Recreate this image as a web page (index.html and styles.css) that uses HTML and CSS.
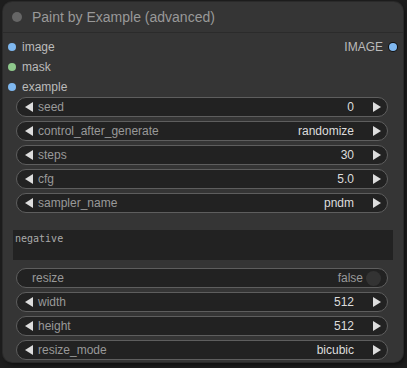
FILE: index.html
```html
<!DOCTYPE html>
<html>
<head>
<meta charset="utf-8">
<link rel="stylesheet" href="styles.css">
</head>
<body>
<div class="node">
  <div class="title">
    <span class="title-dot"></span>
    <span class="title-text">Paint by Example (advanced)</span>
  </div>
  <div class="slots">
    <div class="slot-row">
      <div class="slot-in"><span class="dot blue"></span><span>image</span></div>
      <div class="slot-out"><span>IMAGE</span><span class="dot blue ring"></span></div>
    </div>
    <div class="slot-row">
      <div class="slot-in"><span class="dot green"></span><span>mask</span></div>
    </div>
    <div class="slot-row">
      <div class="slot-in"><span class="dot blue"></span><span>example</span></div>
    </div>
  </div>
  <div class="widgets">
    <div class="widget"><span class="arrow-l"></span><span class="label">seed</span><span class="value">0</span><span class="arrow-r"></span></div>
    <div class="widget"><span class="arrow-l"></span><span class="label">control_after_generate</span><span class="value">randomize</span><span class="arrow-r"></span></div>
    <div class="widget"><span class="arrow-l"></span><span class="label">steps</span><span class="value">30</span><span class="arrow-r"></span></div>
    <div class="widget"><span class="arrow-l"></span><span class="label">cfg</span><span class="value">5.0</span><span class="arrow-r"></span></div>
    <div class="widget"><span class="arrow-l"></span><span class="label">sampler_name</span><span class="value">pndm</span><span class="arrow-r"></span></div>
  </div>
  <div class="textarea">negative</div>
  <div class="widgets">
    <div class="widget toggle"><span class="label">resize</span><span class="value muted">false</span><span class="knob"></span></div>
    <div class="widget"><span class="arrow-l"></span><span class="label">width</span><span class="value">512</span><span class="arrow-r"></span></div>
    <div class="widget"><span class="arrow-l"></span><span class="label">height</span><span class="value">512</span><span class="arrow-r"></span></div>
    <div class="widget"><span class="arrow-l"></span><span class="label">resize_mode</span><span class="value">bicubic</span><span class="arrow-r"></span></div>
  </div>
</div>
</body>
</html>
```

FILE: styles.css
```css
html, body {
  margin: 0;
  padding: 0;
  background: #1d1d1d;
  width: 407px;
  height: 368px;
  overflow: hidden;
  font-family: "Liberation Sans", Arial, sans-serif;
}
.node {
  margin: 2px 0 0 3px;
  width: 400px;
  height: 360px;
  box-sizing: border-box;
  background: #353535;
  border-radius: 9px;
  box-shadow: 0 0 0 1px #2a2a2a, 2px 3px 4px rgba(0,0,0,0.5);
  display: flex;
  flex-direction: column;
}
.title {
  height: 30px;
  border-bottom: 1px solid #2b2b2b;
  display: flex;
  align-items: center;
  padding-left: 9px;
  gap: 10px;
}
.title-dot {
  width: 10px;
  height: 10px;
  border-radius: 50%;
  background: #666;
}
.title-text {
  color: #999;
  font-size: 14px;
}
.slots {
  padding-top: 4px;
  display: flex;
  flex-direction: column;
}
.slot-row {
  height: 20px;
  display: flex;
  align-items: center;
  justify-content: space-between;
  padding: 0 6px 0 5px;
  font-size: 12px;
  color: #bbb;
}
.slot-in, .slot-out {
  display: flex;
  align-items: center;
  gap: 6px;
}
.dot {
  width: 8px;
  height: 8px;
  border-radius: 50%;
}
.blue { background: #7fb8f0; }
.green { background: #8fc98c; }
.ring {
  width: 8px;
  height: 8px;
  box-shadow: 0 0 0 1px #111;
}
.widgets {
  display: flex;
  flex-direction: column;
  gap: 4px;
  margin: 0 15px 0 13px;
}
.widget {
  height: 20px;
  box-sizing: border-box;
  border: 1px solid #5e5e5e;
  border-radius: 10px;
  background: #222;
  display: flex;
  align-items: center;
  padding: 0 6px 0 8px;
  font-size: 12px;
}
.arrow-l {
  width: 0;
  height: 0;
  border-top: 5px solid transparent;
  border-bottom: 5px solid transparent;
  border-right: 8px solid #ddd;
  margin-right: 5px;
}
.arrow-r {
  width: 0;
  height: 0;
  border-top: 5px solid transparent;
  border-bottom: 5px solid transparent;
  border-left: 8px solid #ddd;
  margin-left: 19px;
}
.label {
  color: #999;
  flex: 1;
}
.value {
  color: #ddd;
}
.muted {
  color: #999;
}
.toggle {
  padding-left: 15px;
  padding-right: 6px;
}
.knob {
  width: 15px;
  height: 15px;
  border-radius: 50%;
  background: #333;
  margin-left: 3px;
}
.textarea {
  margin: 17px 10px 8px 10px;
  height: 30px;
  box-sizing: border-box;
  background: #222;
  padding: 3px 2px;
  font-family: "DejaVu Sans Mono", monospace;
  font-size: 10px;
  color: #aaa;
}
```
